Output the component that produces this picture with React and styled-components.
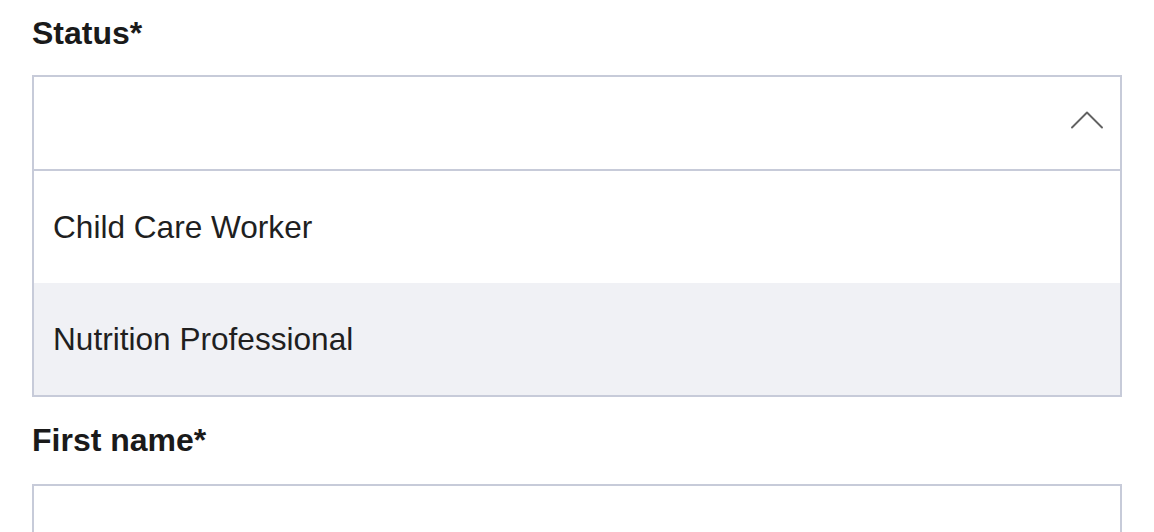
import React from "react";
import styled, { createGlobalStyle } from "styled-components";

const Global = createGlobalStyle`
  html, body { margin: 0; padding: 0; background: #fff; }
  body { font-family: "Liberation Sans", Arial, Helvetica, sans-serif; color: #1c1c1e; }
`;

const Page = styled.div`
  padding: 13px 32px 0 32px;
  width: 1090px;
`;

const Field = styled.div`
  display: flex;
  flex-direction: column;
  margin-bottom: ${(p) => p.$mb || 0}px;
`;

const Label = styled.label`
  font-size: 32px;
  font-weight: 700;
  line-height: 40px;
  color: #1a1a1a;
  margin-bottom: ${(p) => p.$mb || 22}px;
`;

const Control = styled.div`
  height: 92px;
  border: 2px solid #c7cbd9;
  display: flex;
  align-items: center;
  justify-content: flex-end;
  padding-right: 17px;
  background: #fff;
`;

const ChevronWrap = styled.span`
  display: flex;
  margin-bottom: 6px;
`;

const List = styled.ul`
  list-style: none;
  margin: 0;
  padding: 0;
  border: 2px solid #c7cbd9;
  border-top: none;
`;

const Option = styled.li`
  height: 112px;
  display: flex;
  align-items: center;
  padding-left: 19px;
  font-size: 31.6px;
  color: #1f1f1f;
  background: ${(p) => (p.$active ? "#f0f1f5" : "#fff")};
`;

const Input = styled.div`
  height: 92px;
  border: 2px solid #c7cbd9;
  background: #fff;
`;

const Chevron = () => (
  <svg width="32" height="18" viewBox="0 0 32 18" fill="none">
    <path d="M1 16.5 L16 1.5 L31 16.5" stroke="#626262" strokeWidth="1.9" strokeLinecap="round" strokeLinejoin="round" />
  </svg>
);

export default function App() {
  return (
    <>
      <Global />
      <Page>
        <Field $mb={23}>
          <Label>Status*</Label>
          <Control>
            <ChevronWrap>
              <Chevron />
            </ChevronWrap>
          </Control>
          <List>
            <Option>Child Care Worker</Option>
            <Option $active>Nutrition Professional</Option>
          </List>
        </Field>
        <Field>
          <Label $mb={24}>First name*</Label>
          <Input />
        </Field>
      </Page>
    </>
  );
}
